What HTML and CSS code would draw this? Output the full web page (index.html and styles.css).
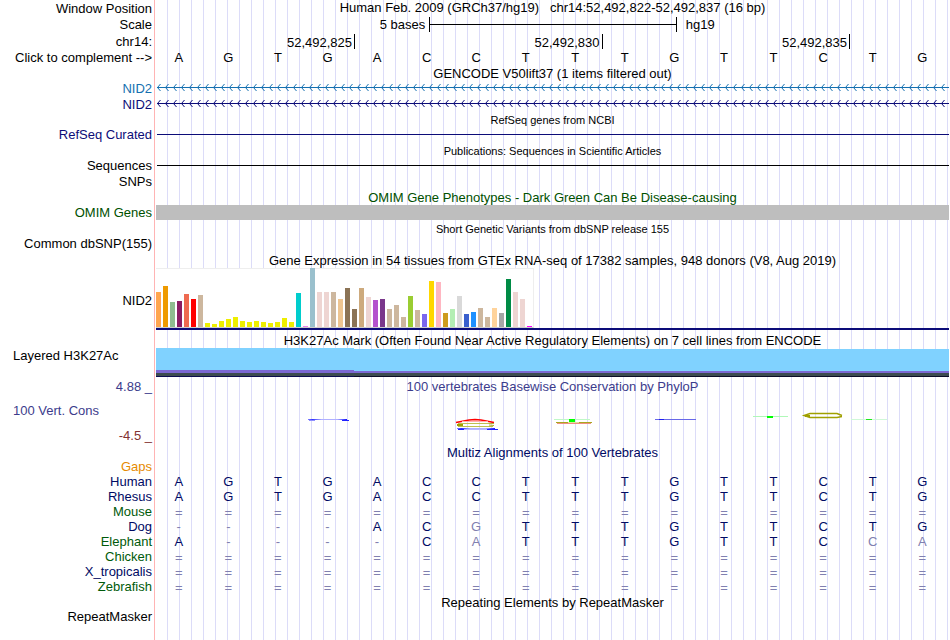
FILE: index.html
```
<!DOCTYPE html>
<html lang="en">
<head>
  <meta charset="UTF-8" />
  <title>Human chr14:52,492,822-52,492,837</title>
  <meta name="viewport" content="width=device-width, initial-scale=1" />
  <link rel="stylesheet" href="styles.css">
</head>
<body>
  <main class="tracks">
    <div class="row tall">
      <div class="label">Window Position</div>
      <div class="data title position">Human Feb. 2009 (GRCh37/hg19) &nbsp; chr14:52,492,822-52,492,837 (16 bp)</div>
    </div>
    <div class="row ruler">
      <div class="label">Scale</div>
      <div class="data scale">
        <span class="scale-size">5 bases</span>
        <span class="scale-bar"></span>
        <span class="scale-db">hg19</span>
      </div>
    </div>
    <div class="row ruler">
      <div class="label">chr14:</div>
      <div class="data ticks">
        <span>52,492,825</span>
        <span>52,492,830</span>
        <span>52,492,835</span>
      </div>
    </div>
    <div class="row">
      <div class="label">Click to complement --&gt;</div>
      <div class="data bases" data-seq="AGTGACCTTTGTTCTG"></div>
    </div>

    <div class="row">
      <div class="label"></div>
      <h2 class="data title">GENCODE V50lift37 (1 items filtered out)</h2>
    </div>
    <div class="row tall gencode">
      <div class="label">NID2</div>
      <svg class="data" height="16">
        <defs>
          <pattern id="arrows" x="1" width="8" height="16" patternUnits="userSpaceOnUse">
            <path d="M3.5 4L.5 7.5L3.5 11" fill="none" stroke="#1470b0" />
          </pattern>
        </defs>
        <rect width="100%" height="16" fill="url(#arrows)" />
        <rect x="1" y="7" width="100%" height="1" fill="#1470b0" />
      </svg>
    </div>
    <div class="row tall refseq">
      <div class="label">NID2</div>
      <svg class="data" height="16">
        <defs>
          <pattern id="arrows-dark" x="1" width="8" height="16" patternUnits="userSpaceOnUse">
            <path d="M3.5 4L.5 7.5L3.5 11" fill="none" stroke="#0c0c78" />
          </pattern>
        </defs>
        <rect width="100%" height="16" fill="url(#arrows-dark)" />
        <rect x="1" y="7" width="100%" height="1" fill="#0c0c78" />
      </svg>
    </div>

    <div class="row">
      <div class="label"></div>
      <h2 class="data title small">RefSeq genes from NCBI</h2>
    </div>
    <div class="row refseq">
      <div class="label">RefSeq Curated</div>
      <div class="data"><div class="line"></div></div>
    </div>

    <div class="row tall">
      <div class="label"></div>
      <h2 class="data title small">Publications: Sequences in Scientific Articles</h2>
    </div>
    <div class="row">
      <div class="label">Sequences</div>
      <div class="data"><div class="line"></div></div>
    </div>
    <div class="row tall">
      <div class="label">SNPs</div>
    </div>

    <div class="row tall omim">
      <div class="label"></div>
      <h2 class="data title">OMIM Gene Phenotypes - Dark Green Can Be Disease-causing</h2>
    </div>
    <div class="row omim">
      <div class="label">OMIM Genes</div>
      <div class="data gray-bar"></div>
    </div>

    <div class="row tall">
      <div class="label"></div>
      <h2 class="data title small">Short Genetic Variants from dbSNP release 155</h2>
    </div>
    <div class="row">
      <div class="label">Common dbSNP(155)</div>
    </div>

    <div class="row ruler">
      <div class="label"></div>
      <h2 class="data title">Gene Expression in 54 tissues from GTEx RNA-seq of 17382 samples, 948 donors (V8, Aug 2019)</h2>
    </div>
    <div class="row gtex">
      <div class="label">NID2</div>
      <div class="data gene-model">
        <div class="bars" id="bars"></div>
      </div>
    </div>

    <div class="row h3k-title">
      <div class="label"></div>
      <h2 class="data title">H3K27Ac Mark (Often Found Near Active Regulatory Elements) on 7 cell lines from ENCODE</h2>
    </div>
    <div class="row h3k">
      <div class="label left">Layered H3K27Ac</div>
      <div class="data signal">
        <div class="signal-high"></div>
        <div class="signal-low"></div>
      </div>
    </div>

    <div class="row cons">
      <div class="label">
        <div class="cons-max">4.88 _</div>
        <div class="cons-name left">100 Vert. Cons</div>
        <div class="cons-min">-4.5 _</div>
      </div>
      <div class="data">
        <h2 class="title cons-max">100 vertebrates Basewise Conservation by PhyloP</h2>
        <svg class="logo" viewBox="0 0 793 48" preserveAspectRatio="none">
          <defs>
            <linearGradient id="fade" x1="0" x2="1" y1="0" y2="0">
              <stop offset="0" stop-color="#8080ff" />
              <stop offset=".12" stop-color="#3030ff" />
              <stop offset=".35" stop-color="#b0b0ff" />
              <stop offset=".75" stop-color="#b0b0ff" />
              <stop offset="1" stop-color="#1010ff" />
            </linearGradient>
          </defs>
          <rect x="152" y="23" width="39" height="1" fill="url(#fade)" />
          <rect x="153" y="24" width="6" height="1" fill="#9090ff" />
          <rect x="186" y="24" width="7" height="1" fill="#2020ff" />

          <path d="M300 26.5L313 24L319 23.5L325 24L338 26.5" fill="none" stroke="#f00" stroke-width="1.6" />
          <rect x="306" y="25" width="26" height="1" fill="#ffb0b0" />
          <path d="M302 27.5H337M302 30.5H337" stroke="#c0c050" />
          <path d="M333 28L338 27.5M333 30L338 29.5" stroke="#b0b030" />
          <rect x="301" y="28" width="6" height="2" fill="#a0a000" />
          <rect x="301" y="32" width="38" height="1" fill="url(#fade)" />
          <path d="M302 33.5H308M331 33.5H342" stroke="#2020ff" />
          <path d="M308 33.5H331" stroke="#b8b8ff" />

          <rect x="398" y="23" width="36" height="1" fill="#c0f8c8" />
          <rect x="413" y="23" width="6" height="3" fill="#00ff00" />
          <path d="M400 26.5H412M423 26.5H436" stroke="#a8a820" />
          <path d="M412 26.5H423" stroke="#e0e0a0" />
          <path d="M401 27.5H435" stroke="#f09080" />

          <rect x="499" y="23" width="41" height="1" fill="#6868e8" />
          <rect x="503" y="23" width="5" height="1" fill="#2020f0" />

          <rect x="597" y="20" width="35" height="1" fill="#b0f8b8" />
          <rect x="611" y="20" width="6" height="2" fill="#00ff00" />

          <path d="M686 19.5L681 17.5H654L648 19.5L654 21.5H681L686 20.5" fill="none" stroke="#a0a000" stroke-width="1.4" />
          <rect x="649" y="19" width="5" height="2" fill="#a0a000" />

          <rect x="695" y="23" width="36" height="1" fill="#d0f8d8" />
          <rect x="710" y="23" width="6" height="1" fill="#20e820" />
        </svg>
      </div>
    </div>

    <div class="row multiz">
      <div class="label"></div>
      <h2 class="data title">Multiz Alignments of 100 Vertebrates</h2>
    </div>
    <div class="row gaps">
      <div class="label">Gaps</div>
    </div>
    <div class="row multiz">
      <div class="label">Human</div>
      <div class="data bases" data-seq="AGTGACCTTTGTTCTG"></div>
    </div>
    <div class="row multiz">
      <div class="label">Rhesus</div>
      <div class="data bases" data-seq="AGTGACCTTTGTTCTG"></div>
    </div>
    <div class="row multiz alt">
      <div class="label">Mouse</div>
      <div class="data bases unaligned" data-seq="================"></div>
    </div>
    <!-- lower case = differs from human -->
    <div class="row multiz">
      <div class="label">Dog</div>
      <div class="data bases" data-seq="----ACgTTTGTTCTG"></div>
    </div>
    <div class="row multiz alt">
      <div class="label">Elephant</div>
      <div class="data bases" data-seq="A----CaTTTGTTCca"></div>
    </div>
    <div class="row multiz alt">
      <div class="label">Chicken</div>
      <div class="data bases unaligned" data-seq="================"></div>
    </div>
    <div class="row multiz">
      <div class="label">X_tropicalis</div>
      <div class="data bases unaligned" data-seq="================"></div>
    </div>
    <div class="row multiz alt">
      <div class="label">Zebrafish</div>
      <div class="data bases unaligned" data-seq="================"></div>
    </div>

    <div class="row">
      <div class="label"></div>
      <h2 class="data title">Repeating Elements by RepeatMasker</h2>
    </div>
    <div class="row">
      <div class="label">RepeatMasker</div>
    </div>
  </main>

  <script>
    // one [height, color] pair per GTEx tissue
    const tissues = [
      [35, "#ffa54f"], [41, "#ee9a00"], [25, "#8fbc8f"], [26, "#8b1c62"], [33, "#ee6a50"], [28, "#ff0000"],
      [32, "#cdb79e"], [4, "#eeee00"], [3, "#eeee00"], [6, "#eeee00"], [8, "#eeee00"], [10, "#eeee00"],
      [6, "#eeee00"], [5, "#eeee00"], [6, "#eeee00"], [5, "#eeee00"], [4, "#eeee00"], [5, "#eeee00"],
      [9, "#eeee00"], [5, "#eeee00"], [34, "#00cdcd"], [1, "#ee82ee"], [59, "#9ac0cd"], [35, "#eed5d2"],
      [35, "#eed5d2"], [35, "#cdb79e"], [28, "#eec591"], [39, "#8b7355"], [18, "#8b7355"], [39, "#cdaa7d"],
      [30, "#eed5d2"], [27, "#b452cd"], [28, "#7a378b"], [18, "#cdb79e"], [22, "#cdb79e"], [10, "#cdb79e"],
      [31, "#9acd32"], [17, "#cdb79e"], [13, "#7a67ee"], [46, "#ffd700"], [45, "#ffb6c1"], [14, "#cd9b1d"],
      [18, "#b4eeb4"], [31, "#d9d9d9"], [13, "#3a5fcd"], [15, "#1e90ff"], [19, "#cdb79e"], [10, "#cdb79e"],
      [19, "#ffd39b"], [14, "#a6a6a6"], [48, "#008b45"], [35, "#eed5d2"], [28, "#eed5d2"], [1, "#ff00ff"]
    ];

    const bars = document.getElementById("bars");
    tissues.forEach(([height, color]) => {
      const bar = document.createElement("span");
      bar.style.height = height + "px";
      bar.style.background = color;
      bars.appendChild(bar);
    });

    document.querySelectorAll(".bases").forEach(row => {
      for (const base of row.dataset.seq) {
        const cell = document.createElement("span");
        cell.textContent = base.toUpperCase();
        if (!/[A-Z]/.test(base)) cell.className = "faint";
        row.appendChild(cell);
      }
    });
  </script>
</body>
</html>
```
FILE: styles.css
```
body {
  margin: 0;
  background: #fff;
  color: #000;
  font-family: "Liberation Sans", Arial, sans-serif;
  font-size: 13px;
  line-height: 15px;
}

h2 {
  line-height: 17px;
}

/* pink divider, white label column, then a guide line every 12px */
.tracks {
  min-height: 100vh;
  margin-right: 1px;
  background:
    linear-gradient(#ffb4b4, #ffb4b4) 154px 0 / 1px 100% no-repeat,
    linear-gradient(#fff, #fff) 0 0 / 166px 100% no-repeat,
    linear-gradient(to right, #dcdcf8 1px, transparent 1px) 11px 0 / 12px 100%;
}

.row {
  display: flex;
  height: 15px;
}

.tall {
  height: 16px;
  line-height: 17px;
}

.tall h2 {
  line-height: 18px;
}

.ruler {
  height: 17px;
  line-height: 18px;
}

.ruler h2 {
  line-height: 19px;
}

.label {
  flex: none;
  width: 152px;
  margin-right: 4px;
  text-align: right;
  white-space: nowrap;
}

.left {
  box-sizing: border-box;
  padding-left: 13px;
  text-align: left;
}

.data {
  flex: 1;
  min-width: 0;
}

.title {
  margin: 0;
  font-size: 13px;
  font-weight: normal;
  text-align: center;
  white-space: nowrap;
}

.position {
  line-height: 15px;
}

.small {
  font-size: 11px;
}

.scale,
.ticks {
  display: grid;
  padding-left: 1px;
}

.scale {
  grid-template-columns: 11fr 10fr 11fr;
}

.scale-size {
  padding-right: 4px;
  text-align: right;
}

.scale-bar {
  height: 15px;
  margin-top: 1px;
  border: solid #000;
  border-width: 0 1px;
  background: linear-gradient(#000, #000) 0 7px / 100% 1px no-repeat;
}

.scale-db {
  padding-left: 9px;
}

.ticks {
  grid-template-columns: 4fr 5fr 5fr 2fr;
}

.ticks span {
  height: 15px;
  margin-top: 1px;
  padding-right: 2px;
  border-right: 1px solid #000;
  text-align: right;
}

.bases {
  display: grid;
  grid-template-columns: repeat(16, 1fr);
  margin: 0 2px 0 -2px;
  text-align: center;
}

.faint {
  color: #8080b0;
}

.gencode {
  color: #1470b0;
}

.refseq {
  color: #0c0c78;
}

.line {
  height: 1px;
  margin: 7px 0 0 1px;
  background: currentColor;
}

.omim {
  color: #005000;
}

.gray-bar {
  background: #bebebe;
}

.gtex {
  height: 62px;
  line-height: 66px;
}

.gene-model {
  border-bottom: 2px solid #0c0c78;
}

.bars {
  display: flex;
  align-items: flex-end;
  gap: 2px;
  width: 377px;
  height: 59px;
  border-right: 1px solid #eee;
  border-bottom: 1px solid #ccc;
  background: linear-gradient(#eee, #eee) 0 0 / 100% 1px no-repeat #fff;
}

.bars span {
  width: 5px;
}

.h3k-title {
  height: 18px;
}

.h3k-title h2 {
  line-height: 22px;
}

.h3k {
  height: 29px;
}

.signal {
  display: flex;
}

.signal-high {
  flex: 1;
  background: linear-gradient(#80d2ff 22px, #7b68d2 22px 25px, #3c4b50 25px 28px, #0c0c50 28px);
}

.signal-low {
  flex: 3;
  margin-top: 1px;
  background: linear-gradient(#80d2ff 22px, #7b68d2 22px 24px, #3c4b50 24px 27px, #0c0c28 27px);
}

.cons {
  height: 67px;
}

.cons-max {
  height: 19px;
  color: #3c3c8c;
  line-height: 19px;
}

.cons-name {
  height: 30px;
  color: #3c3c8c;
  line-height: 30px;
}

.cons-min {
  height: 18px;
  color: #823232;
  line-height: 20px;
}

.logo {
  display: block;
  width: 100%;
  height: 48px;
}

.multiz {
  color: #000a64;
}

.alt {
  color: #005a0a;
}

.alt .bases {
  color: #000a64;
}

.unaligned {
  line-height: 17px;
}

.alt .faint {
  color: #8080b0;
}

.gaps {
  color: #e68a00;
}
```
